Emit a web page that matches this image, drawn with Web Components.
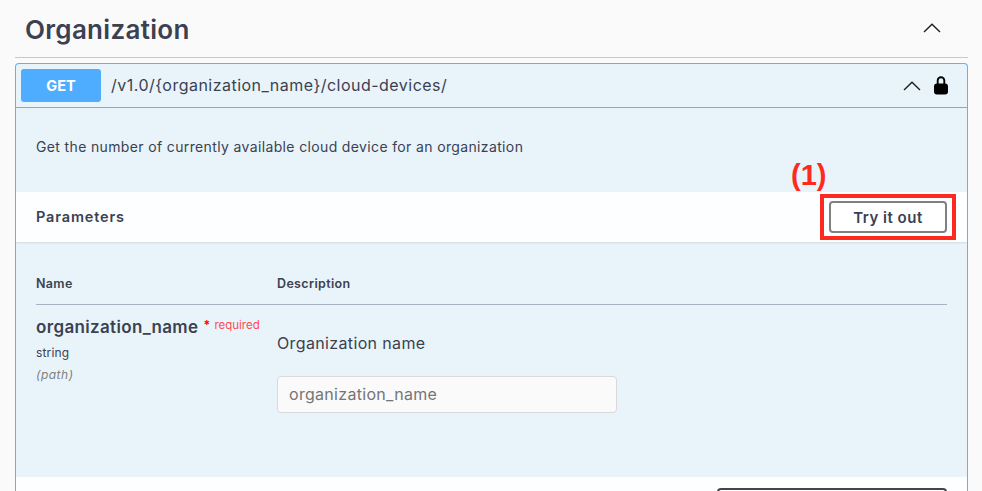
<!DOCTYPE html>
<html>
<head>
<meta charset="utf-8">
<style>
    html, body { margin: 0; height: 100%; overflow: hidden; background: #fafafa; }
    body { font-family: Inter, "Noto Sans", sans-serif; color: #3b4151; }
</style>
</head>
<body>
<api-section title="Organization">
    <api-operation method="GET" path="/v1.0/{organization_name}/cloud-devices/"
        summary="Get the number of currently available cloud device for an organization">
        <api-param name="organization_name" type="string" location="(path)" description="Organization name"></api-param>
    </api-operation>
</api-section>
<script>
const chevron = `<svg width="18" height="10" viewBox="0 0 18 10" fill="none" stroke="#1c1c1c" stroke-width="1.3"><path d="M1 9 L9 1.2 L17 9"/></svg>`;

class ApiSection extends HTMLElement {
    constructor() {
        super();
        this.attachShadow({ mode: 'open' });
        this.shadowRoot.innerHTML = `
            <style>
                :host { display: block; padding: 0 14px 0 15px; }
                header {
                    display: flex; justify-content: space-between; align-items: center;
                    height: 57px; padding: 0 27px 0 10px;
                    border-bottom: 1px solid #c8c8c9; margin-bottom: 5px;
                }
                h2 { margin: 0; font-size: 26px; font-weight: 600; color: #3b4151; letter-spacing: .3px; position: relative; top: 1px; }
                svg { display: block; position: relative; top: -1px; }
            </style>
            <header><h2>${this.getAttribute('title')}</h2>${chevron}</header>
            <slot></slot>
        `;
    }
}
customElements.define('api-section', ApiSection);

class ApiOperation extends HTMLElement {
    constructor() {
        super();
        this.attachShadow({ mode: 'open' });
        this.shadowRoot.innerHTML = `
            <style>
                :host {
                    display: block; position: relative; height: 427px; overflow: hidden;
                    background: #e8f4fa; border: 1px solid #61affe; border-bottom: 0;
                    border-radius: 4px 4px 0 0; font-size: 14px;
                }
                .head {
                    display: flex; align-items: center; height: 43px; padding: 0 18px 0 5px;
                    border-bottom: 1px solid #61affe;
                }
                .method {
                    width: 80px; height: 33px; background: #4fadff; color: #fff; border-radius: 3px;
                    display: flex; align-items: center; justify-content: center;
                    font-size: 14.5px; font-weight: 700;
                }
                .path { flex: 1; margin-left: 10px; font-size: 16px; letter-spacing: .48px; color: #3b4151; position: relative; top: -1px; }
                .head svg.chev { margin-right: 12px; }
                .summary { height: 84px; box-sizing: border-box; padding: 29px 20px 0; font-size: 14px; line-height: 20px; color: #3b4151; letter-spacing: .36px; }
                .bar {
                    display: flex; justify-content: space-between; align-items: center;
                    height: 50px; padding: 0 20px; background: #fdfeff;
                    box-shadow: 0 1px 2px rgba(0,0,0,.1);
                }
                .bar h4 { margin: 0; font-size: 14.5px; font-weight: 600; letter-spacing: .85px; position: relative; top: -1px; }
                .bar button {
                    width: 118px; height: 32px; box-sizing: border-box; background: #fff; padding: 0;
                    border: 2px solid #808080; border-radius: 4px; font: 600 15px Inter, sans-serif; letter-spacing: .5px; color: #3b4151;
                }
                .body { height: 235px; box-sizing: border-box; padding: 32px 20px 0; }
                .foot { height: 50px; background: #fdfeff; display: flex; justify-content: flex-end; padding: 11px 20px 0; }
                .foot i { display: block; width: 230px; height: 40px; box-sizing: border-box; border: 2px solid #41444e; border-radius: 4px; }
                .note { position: absolute; left: 775px; top: 96px; color: #ff2a1f; font-size: 29px; line-height: 30px; font-weight: 700; font-family: "Liberation Sans", sans-serif; }
                .mark { position: absolute; left: 804px; top: 130px; width: 136px; height: 46px; box-sizing: border-box; border: 4px solid #ff2a1f; }
            </style>
            <div class="head">
                <div class="method">${this.getAttribute('method')}</div>
                <div class="path">${this.getAttribute('path')}</div>
                <svg class="chev" width="18" height="10" viewBox="0 0 18 10" fill="none" stroke="#1c1c1c" stroke-width="1.3"><path d="M1 9 L9 1.2 L17 9"/></svg>
                <svg width="16" height="19" viewBox="0 0 16 19"><path d="M4.7 9V4.6a3.3 3.3 0 0 1 6.6 0V9" fill="none" stroke="#000" stroke-width="1.9"/><rect x="1" y="7.4" width="14" height="11" rx="3" fill="#000"/></svg>
            </div>
            <div class="summary">${this.getAttribute('summary')}</div>
            <div class="bar"><h4>Parameters</h4><button>Try it out</button></div>
            <div class="body"><slot></slot></div>
            <div class="foot"><i></i></div>
            <div class="note">(1)</div>
            <div class="mark"></div>
        `;
    }
}
customElements.define('api-operation', ApiOperation);

class ApiParam extends HTMLElement {
    constructor() {
        super();
        this.attachShadow({ mode: 'open' });
        this.shadowRoot.innerHTML = `
            <style>
                :host { display: block; color: #3b4151; }
                .cols { display: grid; grid-template-columns: 241px 1fr; }
                .th { height: 20px; padding-bottom: 10px; border-bottom: 1px solid #a5b3c5; font-size: 12.5px; line-height: 20px; font-weight: 600; letter-spacing: .35px; }
                .name { padding-top: 10px; }
                .name b { font-size: 17px; font-weight: 600; line-height: 24px; letter-spacing: .34px; }
                .name sup { font-size: 11.5px; color: #ff4a55; vertical-align: 4px; line-height: 0; margin-left: 5px; }
                .name sup span { color: #f00; font-weight: 700; font-size: 12px; margin-right: 1px; }
                .type { font-size: 12px; line-height: 16px; margin-top: 6px; letter-spacing: .15px; }
                .loc { font-size: 12px; font-style: italic; line-height: 16px; color: #808080; margin-top: 6px; letter-spacing: .5px; }
                .desc { padding-top: 26px; font-size: 16px; line-height: 24px; letter-spacing: .36px; }
                .field {
                    margin-top: 21px; width: 340px; height: 37px; box-sizing: border-box; padding: 0 11px;
                    background: #fafafa; border: 1px solid #d9d9d9; border-radius: 4px;
                    font-size: 16px; line-height: 35px; color: #757575; letter-spacing: .3px;
                }
            </style>
            <div class="cols">
                <div class="th">Name</div><div class="th">Description</div>
                <div class="name">
                    <b>${this.getAttribute('name')}</b><sup><span>*</span> required</sup>
                    <div class="type">${this.getAttribute('type')}</div>
                    <div class="loc">${this.getAttribute('location')}</div>
                </div>
                <div class="desc">
                    ${this.getAttribute('description')}
                    <div class="field">${this.getAttribute('name')}</div>
                </div>
            </div>
        `;
    }
}
customElements.define('api-param', ApiParam);
</script>
</body>
</html>
